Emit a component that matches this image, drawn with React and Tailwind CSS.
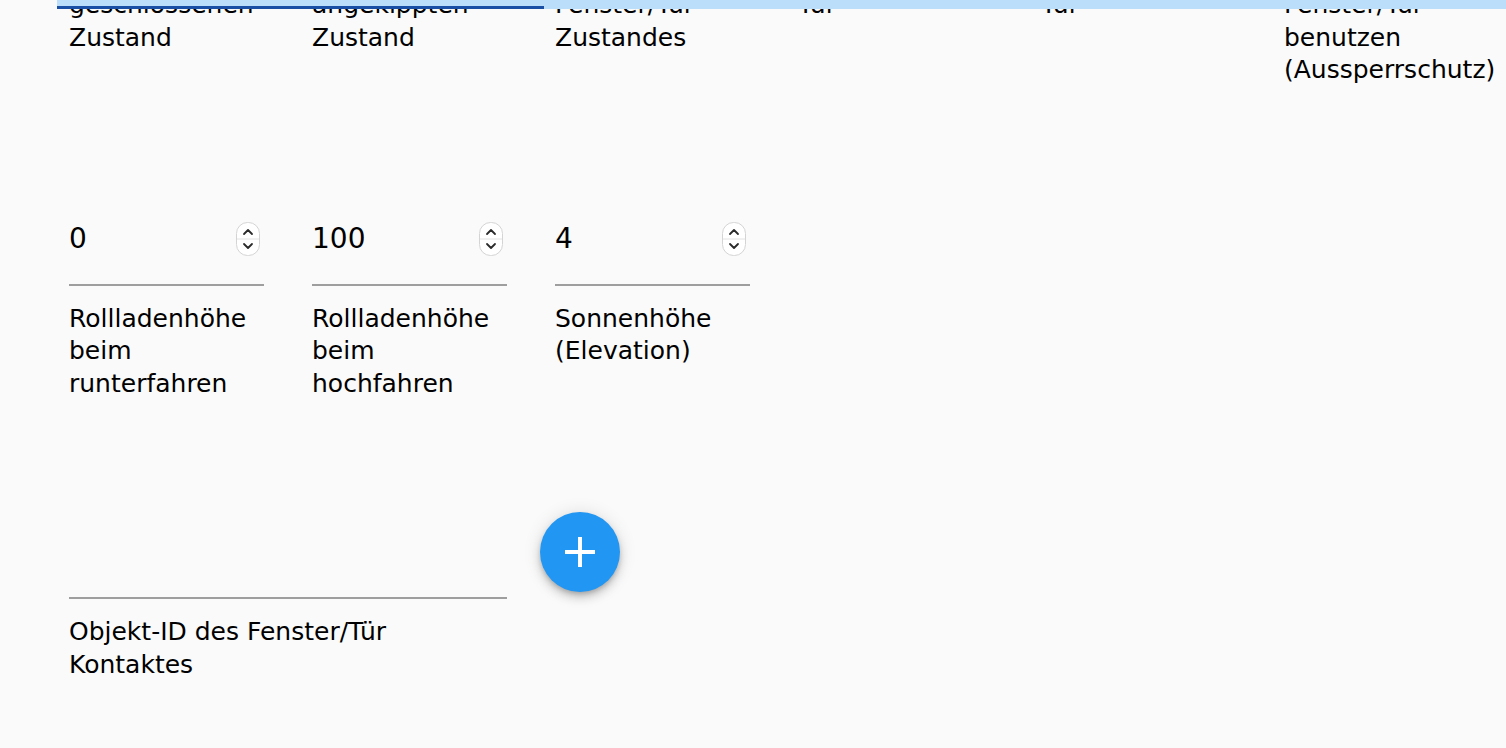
import React from 'react';

// Spin-Buttons im Stil des nativen Number-Inputs
const Spinner = () => (
  <svg width="24" height="34" viewBox="0 0 24 34" className="shrink-0">
    <rect x="0.5" y="0.5" width="23" height="33" rx="11" fill="#ffffff" stroke="#d4d4d4" />
    <line x1="1" y1="17" x2="23" y2="17" stroke="#e2e2e2" />
    <path d="M8 12 L12 8 L16 12" fill="none" stroke="#2a2a2a" strokeWidth="1.8" strokeLinecap="round" strokeLinejoin="round" />
    <path d="M8 22 L12 26 L16 22" fill="none" stroke="#2a2a2a" strokeWidth="1.8" strokeLinecap="round" strokeLinejoin="round" />
  </svg>
);

const Field = ({ value, label, number = false, className = '' }) => (
  <div className={`flex flex-col ${className}`}>
    <div className="h-[65px] border-b-2 border-[#9e9e9e]">
      <div className="flex h-[36px] items-center justify-between pr-[4px]">
        <span className="text-[28px] leading-[36px]">{value}</span>
        {number && <Spinner />}
      </div>
    </div>
    <div className="mt-[17px] text-[25px] leading-[32.5px]">{label}</div>
  </div>
);

const topFields = [
  { value: '0', label: 'Rollladenhöhe im geschlossenen Zustand' },
  { value: '30', label: 'Rollladenhöhe im angekippten Zustand' },
  { value: '0', label: 'Rollladenhöhe nach Ende des Fenster/Tür Zustandes' },
  { value: '0', label: 'Verzögerung bei geöffneter Tür' },
  { value: '0', label: 'Verzögerung bei gekippter Tür' },
  { value: '', label: 'Rollladen nicht bei offener Fenster/Tür benutzen (Aussperrschutz)' }
];

const midFields = [
  { value: '0', label: 'Rollladenhöhe beim runterfahren' },
  { value: '100', label: 'Rollladenhöhe beim hochfahren' },
  { value: '4', label: 'Sonnenhöhe (Elevation)' }
];

export default function App() {
  return (
    <div
      className="relative h-[748px] overflow-hidden bg-[#fafafa] text-black"
      style={{ fontFamily: '"DejaVu Sans", "Noto Sans", sans-serif' }}
    >
      {/* Formular (gescrollt) */}
      <div className="mt-[-158px] grid grid-cols-[repeat(6,195px)] items-start gap-x-[48px] gap-y-[134px] pl-[69px]">
        {topFields.map((f, i) => (
          <Field key={'t' + i} value={f.value} label={f.label} number={f.value !== ''} />
        ))}

        {midFields.map((f, i) => (
          <Field key={'m' + i} value={f.value} label={f.label} number className={i === 0 ? 'col-start-1' : ''} />
        ))}

        <Field value="" label="Objekt-ID des Fenster/Tür Kontaktes" className="col-span-2 col-start-1" />

        <div className="ml-[-15px] mt-[-22px]">
          <button className="flex h-20 w-20 items-center justify-center rounded-full bg-[#2196f3] shadow-[0_3px_5px_-1px_rgba(0,0,0,0.2),0_6px_10px_0_rgba(0,0,0,0.14),0_1px_18px_0_rgba(0,0,0,0.12)]">
            <svg width="32" height="32" viewBox="0 0 32 32">
              <path d="M16 1 V31 M1 16 H31" stroke="#ffffff" strokeWidth="4" fill="none" />
            </svg>
          </button>
        </div>
      </div>

      {/* Fortschrittsbalken oben */}
      <div className="absolute left-[57px] right-0 top-0 h-[9px] bg-[#bbdefb]">
        <div className="absolute bottom-0 left-0 h-[3px] w-[487px] bg-[#1a4fa6]" />
      </div>
    </div>
  );
}
